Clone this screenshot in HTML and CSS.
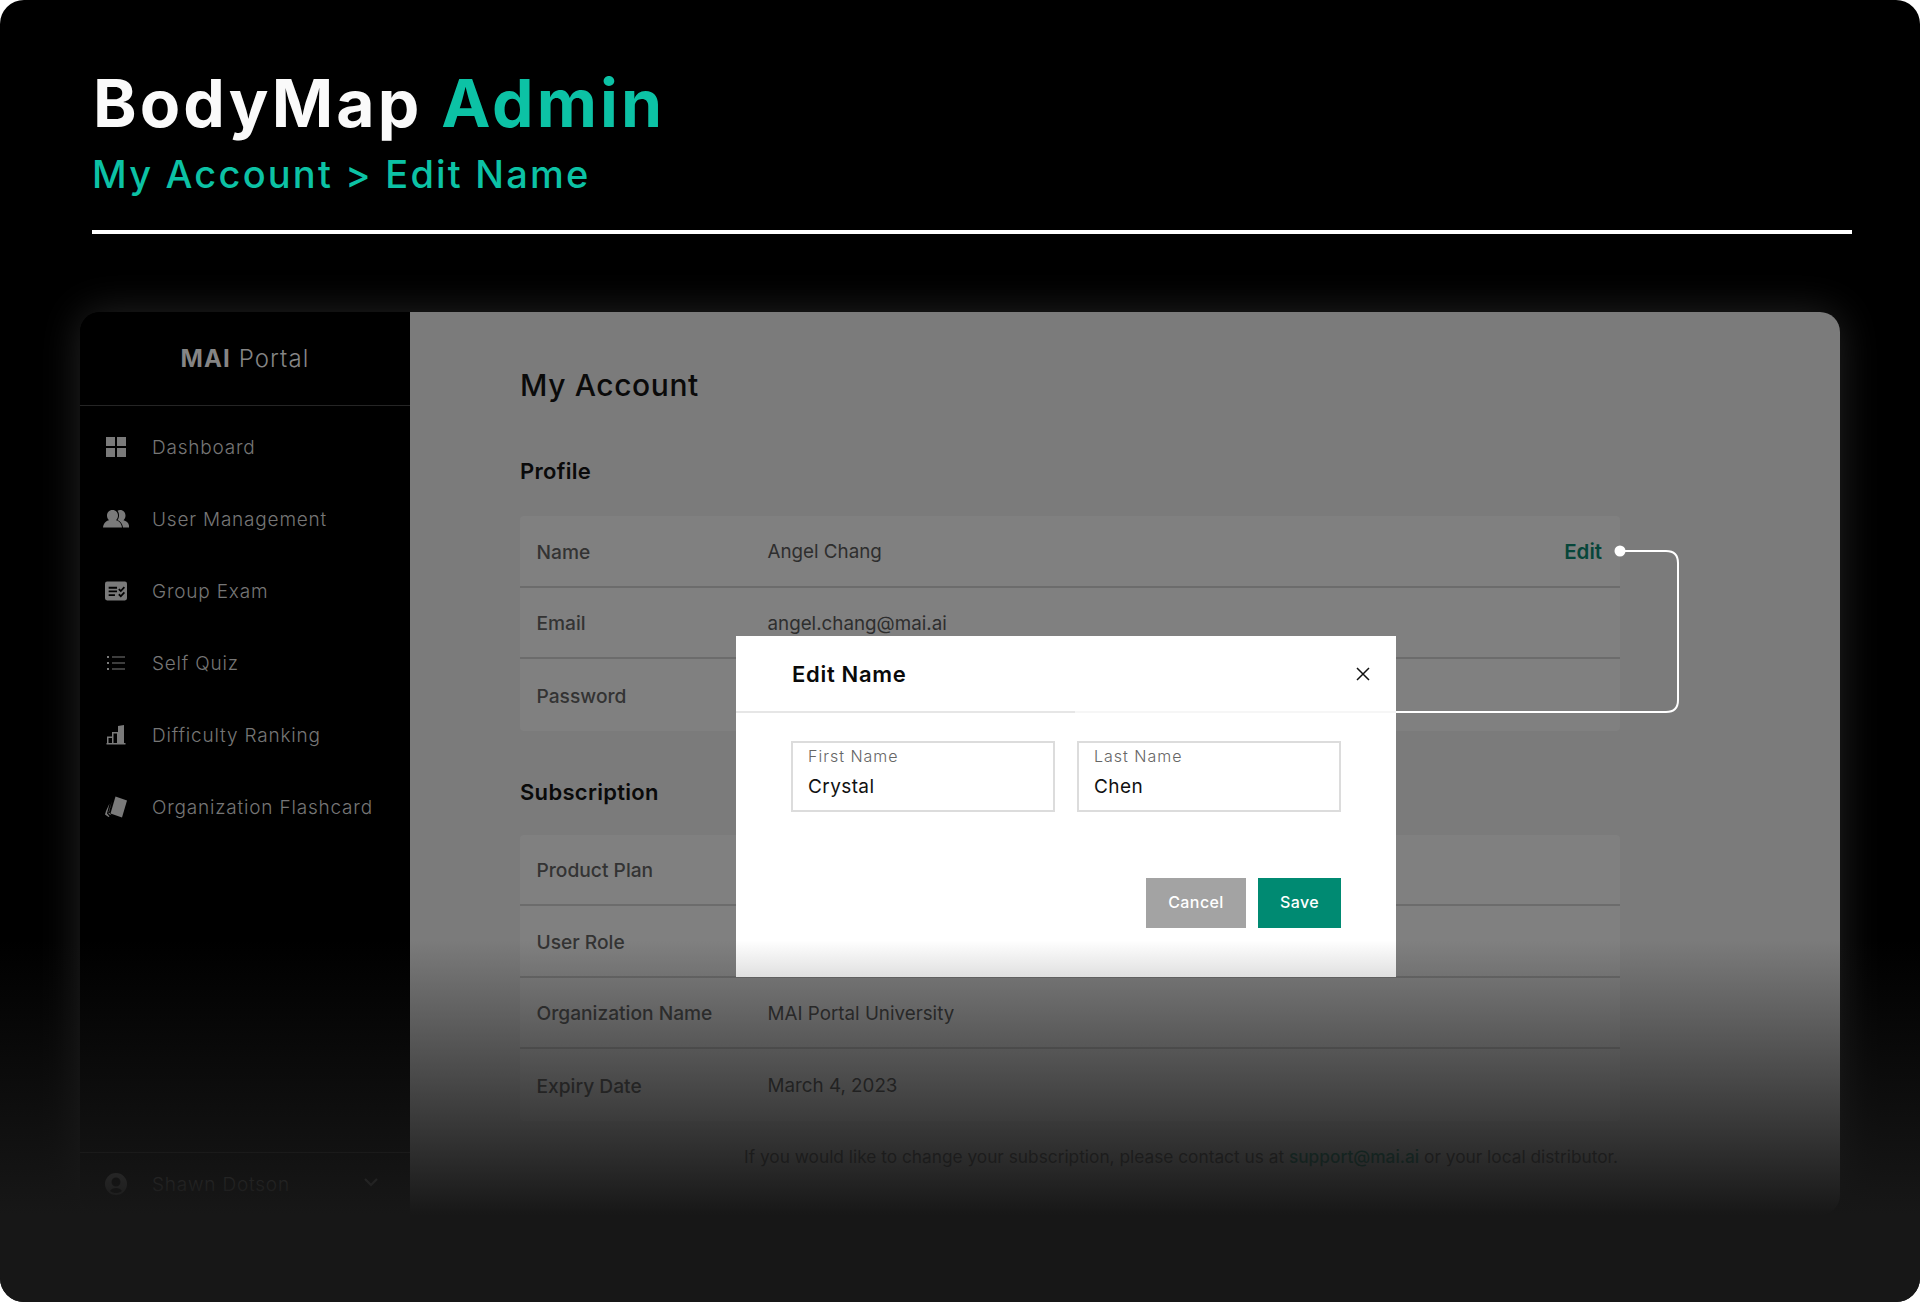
FILE: index.html
```html
<!DOCTYPE html>
<html lang="en">

<head>
  <meta charset="UTF-8">
  <meta name="viewport" content="width=device-width, initial-scale=1.0">
  <title>BodyMap Admin</title>
  <link rel="stylesheet" href="styles.css">
</head>

<body>
  <div class="slide">
    <header class="header">
      <h1 class="title">BodyMap <span class="accent">Admin</span></h1>
      <p class="crumb">My Account &gt; Edit Name</p>
    </header>

    <div class="app">
      <aside class="sidebar">
        <div class="brand"><strong>MAI</strong> Portal</div>
        <nav class="nav">
          <a class="nav-item">
            <svg class="nav-icon" viewBox="-1 -1 22 22"><path d="M0 0h9v9H0zM11 0h9v9h-9zM0 11h9v9H0zM11 11h9v9h-9z" /></svg>
            Dashboard
          </a>
          <a class="nav-item">
            <svg class="nav-icon nav-icon-users" viewBox="0 0 26 20"><path d="M17 1c3.600 0 5.500 2.600 5.500 5.500 0 2-.8 3.700-2 4.700 2.700.7 5 2.300 5.500 5.300v2h-6c-.3-3.300-2.500-6-5.500-7.500 1-1.300 1.500-3 1.500-4.800 0-1.800-.6-3.400-1.500-4.500.7-.4 1.600-.7 2.500-.7z" /><path d="M9.500 1C13 1 15 3.600 15 6.500c0 2-.8 3.700-2 4.700 3 .8 5.500 3 6 7.300H0c.5-4.300 3-6.500 6-7.300-1.200-1-2-2.700-2-4.700C4 3.600 6 1 9.500 1z" /></svg>
            User Management
          </a>
          <a class="nav-item">
            <svg class="nav-icon" viewBox="0 0 21 18"><path fill-rule="evenodd" d="M2 0h17a2 2 0 0 1 2 2v14a2 2 0 0 1-2 2H2a2 2 0 0 1-2-2V2a2 2 0 0 1 2-2zm1.500 5v1.800h8V5zm0 3.500v1.800h8V8.500zm0 3.500v1.800h6V12zm10.300-5.500-1.200 1.200 2.500 2.500 4-4.200-1.200-1.200-2.800 2.900zm0 5-1.200 1.200 2.500 2.500 4-4.200-1.200-1.200-2.800 2.900z" /></svg>
            Group Exam
          </a>
          <a class="nav-item">
            <svg class="nav-icon" viewBox="-2 -4 22 22"><path d="M0 0h2v2H0zM0 6h2v2H0zM0 12h2v2H0zM5 .4h13v1.200H5zM5 6.400h13v1.200H5zM5 12.400h13v1.200H5z" /></svg>
            Self Quiz
          </a>
          <a class="nav-item">
            <svg class="nav-icon" viewBox="-1 -1 22 22"><path fill-rule="evenodd" d="M12 1l6-1v18h1.500v1.500H.5V18H1v-6.500h5V7h6zM2.500 13v5H6v-5zM7.500 8.500V18H11V8.500z" /></svg>
            Difficulty Ranking
          </a>
          <a class="nav-item">
            <svg class="nav-icon" viewBox="0 0 22 21"><path d="M10.500 0 22 4l-5 17-11.500-4z" /><path d="M7 4.500 3.500 15.500l3 3.200 1.500.5L3.500 17.500zM4.500 7 1 14.500l-1 3.500 3.500 2.500 1-.5-2.500-3z" /></svg>
            Organization Flashcard
          </a>
        </nav>
        <div class="user">
          <svg class="nav-icon" viewBox="0 0 22 22"><path fill-rule="evenodd" d="M11 0a11 11 0 1 1 0 22 11 11 0 0 1 0-22zm0 4.500a4.500 4.500 0 1 0 0 9 4.500 4.500 0 0 0 0-9zM5 18c2 1.500 4 2 6 2s4-.5 6-2c-1-2-3.500-3-6-3s-5 1-6 3z" /></svg>
          <span class="user-name">Shawn Dotson</span>
          <svg class="chevron" viewBox="0 0 14 9"><path d="M1 1l6 6 6-6" /></svg>
        </div>
      </aside>

      <main class="main">
        <h2 class="page-title">My Account</h2>

        <h3 class="section-title">Profile</h3>
        <div class="table">
          <div class="row">
            <span class="row-label">Name</span>
            <span class="row-value">Angel Chang</span>
            <span class="row-edit">Edit</span>
          </div>
          <div class="row">
            <span class="row-label">Email</span>
            <span class="row-value">angel.chang@mai.ai</span>
          </div>
          <div class="row">
            <span class="row-label">Password</span>
          </div>
        </div>

        <h3 class="section-title section-title-sub">Subscription</h3>
        <div class="table">
          <div class="row">
            <span class="row-label">Product Plan</span>
          </div>
          <div class="row">
            <span class="row-label">User Role</span>
          </div>
          <div class="row">
            <span class="row-label">Organization Name</span>
            <span class="row-value">MAI Portal University</span>
          </div>
          <div class="row">
            <span class="row-label">Expiry Date</span>
            <span class="row-value">March 4, 2023</span>
          </div>
        </div>
        <p class="note">If you would like to change your subscription, please contact us at <a class="note-link">support@mai.ai</a> or your local distributor.</p>
      </main>
    </div>

    <svg class="connector" viewBox="0 0 1920 1302">
      <path d="M1620 551H1666Q1678 551 1678 563V700Q1678 712 1666 712H1396" />
      <circle cx="1620" cy="551" r="5.500" />
    </svg>

    <div class="modal">
      <div class="modal-head">
        <span class="modal-title">Edit Name</span>
        <svg class="modal-close" viewBox="0 0 14 14"><path d="M1 1l12 12M13 1L1 13" /></svg>
      </div>
      <div class="modal-fields">
        <div class="field">
          <span class="field-label">First Name</span>
          <span class="field-value">Crystal</span>
        </div>
        <div class="field">
          <span class="field-label">Last Name</span>
          <span class="field-value">Chen</span>
        </div>
      </div>
      <div class="modal-actions">
        <button class="button button-cancel">Cancel</button>
        <button class="button button-save">Save</button>
      </div>
    </div>

    <div class="fade"></div>
  </div>
</body>

</html>
```

FILE: styles.css
```css
body {
  margin: 0;
  background: white;
  font-family: Inter, "Liberation Sans", sans-serif;
}

.slide {
  position: relative;
  height: 1302px;
  overflow: hidden;
  background: black;
  border-radius: 24px;
}

/* top heading */
.header {
  height: 171px;
  margin: 0 68px 0 92px;
  padding-top: 59px;
  border-bottom: 4px solid white;
}

.title {
  margin: 0 0 0 1px;
  color: #fafafa;
  font-size: 66px;
  font-weight: 700;
  line-height: 88px;
  letter-spacing: 3.100px;
}

.accent {
  color: #0cc2a5;
}

.crumb {
  margin: 3px 0 0;
  color: #0cc2a5;
  font-size: 38px;
  font-weight: 500;
  line-height: 48px;
  letter-spacing: 2.200px;
}

.app {
  display: flex;
  height: 903px;
  margin: 78px 80px 0;
  border-radius: 20px;
  box-shadow: 0 0 40px rgba(255, 255, 255, .14);
}

/* sidebar */
.sidebar {
  display: flex;
  flex-direction: column;
  flex: none;
  width: 330px;
  background: black;
  border-radius: 20px 0 0 20px;
  color: #767676;
}

.brand {
  height: 93px;
  border-bottom: 1px solid #252525;
  color: #858585;
  font-size: 24px;
  font-weight: 300;
  line-height: 93px;
  letter-spacing: 1.100px;
  text-align: center;
}

.brand strong {
  font-weight: 700;
}

.nav {
  padding-top: 5px;
}

.nav-item {
  display: flex;
  align-items: center;
  height: 72px;
  padding-left: 25px;
  font-size: 19px;
  font-weight: 300;
  letter-spacing: .8px;
}

.nav-icon {
  flex: none;
  width: 22px;
  height: 22px;
  margin-right: 25px;
  fill: #7a7a7a;
}

.nav-icon-users {
  width: 26px;
  height: 20px;
  margin: 0 23px 0 -2px;
}

.user {
  display: flex;
  align-items: center;
  height: 62px;
  margin-top: auto;
  padding: 0 32px 0 25px;
  border-top: 1px solid #252525;
  font-size: 19px;
  font-weight: 300;
  letter-spacing: .8px;
}

.user-name {
  flex: 1;
}

.chevron {
  width: 14px;
  height: 9px;
  margin-bottom: 4px;
  fill: none;
  stroke: #7a7a7a;
  stroke-width: 2;
}

/* main column */
.main {
  flex: 1;
  padding: 52px 220px 0 110px;
  background: #7b7b7b;
  border-radius: 0 20px 20px 0;
}

.page-title {
  margin: 0;
  color: #0a0a0a;
  font-size: 30px;
  font-weight: 500;
  line-height: 42px;
  letter-spacing: .6px;
}

.section-title {
  margin: 51px 0 0;
  color: #0a0a0a;
  font-size: 22px;
  font-weight: 600;
  line-height: 28px;
  letter-spacing: .3px;
}

.section-title-sub {
  margin-top: 47px;
}

.table {
  margin-top: 31px;
  background: #808080;
  border-radius: 4px;
}

.section-title-sub + .table {
  margin-top: 29px;
}

.row {
  display: flex;
  align-items: center;
  height: 71.500px;
  box-sizing: border-box;
  padding: 2px 18px 0 16.500px;
  border-bottom: 2px solid #6c6c6c;
  font-size: 19.200px;
}

.row:last-child {
  border-bottom: none;
}

.row-label {
  flex: none;
  width: 231px;
  color: #333;
  font-weight: 500;
}

.row-value {
  flex: 1;
  color: #2e2e2e;
  font-size: 18.800px;
  font-weight: 400;
}

.row-edit {
  color: #07463a;
  font-size: 20.500px;
  font-weight: 600;
}

.note {
  margin: 24px 2px 0 0;
  color: #2e2e2e;
  font-size: 17.300px;
  line-height: 24px;
  text-align: right;
}

.note-link {
  color: #0a4f3f;
  font-weight: 500;
}

/* connector from Edit to the dialog */
.connector {
  position: absolute;
  top: 0;
  left: 0;
  width: 1920px;
  height: 1302px;
  fill: none;
  stroke: white;
  stroke-width: 2;
}

.connector circle {
  fill: white;
  stroke: none;
}

/* dialog */
.modal {
  position: absolute;
  top: 636px;
  left: 736px;
  width: 660px;
  height: 341px;
  background: white;
}

.modal-head {
  display: flex;
  align-items: center;
  justify-content: space-between;
  height: 75px;
  padding: 0 26px 0 56px;
  border-bottom: 2px solid;
  border-image: linear-gradient(to right, #e6e6e6 339px, #f6f6f6 339px) 1;
}

.modal-title {
  color: #0a0a0a;
  font-size: 22px;
  font-weight: 600;
  letter-spacing: .7px;
}

.modal-close {
  width: 14px;
  height: 14px;
  fill: none;
  stroke: #111;
  stroke-width: 1.500;
}

.modal-fields {
  display: flex;
  gap: 22px;
  padding: 28px 55px 0;
}

.field {
  display: flex;
  flex-direction: column;
  box-sizing: border-box;
  width: 264px;
  height: 71px;
  padding: 1px 15px;
  border: 2px solid #dcdcdc;
}

.field-label {
  color: #666;
  font-size: 16px;
  font-weight: 300;
  line-height: 24px;
  letter-spacing: 1px;
}

.field-value {
  margin-top: 6px;
  color: #111;
  font-size: 19px;
  line-height: 26px;
  letter-spacing: .4px;
}

.modal-actions {
  display: flex;
  justify-content: flex-end;
  gap: 12px;
  padding: 66px 55px 0 0;
}

.button {
  height: 50px;
  padding: 0 0 2px;
  border: none;
  color: white;
  font-family: inherit;
  font-size: 16px;
  font-weight: 500;
  letter-spacing: .4px;
}

.button-cancel {
  width: 100px;
  background: #a3a3a3;
}

.button-save {
  width: 83px;
  background: #008a72;
}

/* bottom fade over the whole slide */
.fade {
  position: absolute;
  inset: 0;
  background: linear-gradient(to bottom, rgba(23, 23, 23, 0) 940px, #171717 1215px);
  pointer-events: none;
}
```
